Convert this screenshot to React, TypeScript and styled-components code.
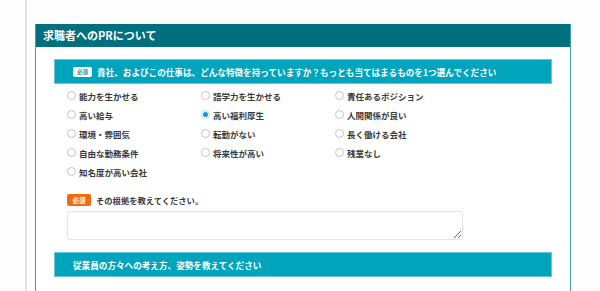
import styled, { createGlobalStyle } from "styled-components";

const GlobalStyle = createGlobalStyle`
  html, body {
    margin: 0;
    padding: 0;
    background: #fdfdfd;
    font-family: "Noto Sans CJK JP", "Noto Sans", sans-serif;
  }
`;

const Page = styled.div`
  margin-left: 25px;
  height: 291px;
  border-left: 2px solid #e4e4e4;
  padding: 24px 0 0 8px;
  box-sizing: border-box;
  overflow: hidden;
`;

const Panel = styled.section`
  width: 536px;
  box-sizing: border-box;
  border: 1px solid #3b9fad;
  border-top: none;
  background: #fff;
`;

const PanelHeader = styled.h2`
  margin: 0;
  height: 23px;
  background: #006f7e;
  color: #fff;
  font-size: 11px;
  font-weight: 700;
  line-height: 23px;
  padding-left: 7px;
`;

const PanelBody = styled.div`
  padding: 12px 18px 40px 18px;
`;

const SectionBar = styled.div`
  height: 25px;
  background: #00a4bc;
  border: 1px solid #6cc6d4;
  box-sizing: border-box;
  display: flex;
  align-items: center;
  gap: 5px;
  padding-left: 18px;
  color: #fff;
  font-size: 8.6px;
  font-weight: 700;
  white-space: nowrap;
`;

const Badge = styled.span<{ $tone: "light" | "orange" }>`
  display: inline-flex;
  align-items: center;
  justify-content: center;
  flex: none;
  border-radius: 2px;
  font-weight: 700;
  background: ${(p) => (p.$tone === "light" ? "#fff" : "#f26b11")};
  color: ${(p) => (p.$tone === "light" ? "#00a4bc" : "#fff")};
  width: ${(p) => (p.$tone === "light" ? "19px" : "24px")};
  height: ${(p) => (p.$tone === "light" ? "10px" : "12px")};
  font-size: ${(p) => (p.$tone === "light" ? "5.5px" : "6.5px")};
`;

const Content = styled.div`
  padding: 0 0 0 13px;
`;

const RadioGrid = styled.div`
  display: grid;
  grid-template-columns: repeat(3, 134px);
  grid-auto-rows: 19px;
  margin-top: 2px;
`;

const Option = styled.label`
  display: flex;
  align-items: center;
  gap: 3px;
  font-size: 8.5px;
  font-weight: 700;
  color: #3a3a3a;
  white-space: nowrap;
`;

const Radio = styled.span<{ $checked?: boolean }>`
  width: 9px;
  height: 9px;
  box-sizing: border-box;
  border-radius: 50%;
  border: 1px solid ${(p) => (p.$checked ? "#b8dcf2" : "#c4c4c4")};
  background: #fff;
  display: inline-flex;
  align-items: center;
  justify-content: center;
  flex: none;
  &::after {
    content: "";
    width: 5px;
    height: 5px;
    border-radius: 50%;
    background: ${(p) => (p.$checked ? "#1598e3" : "transparent")};
  }
`;

const QuestionRow = styled.div`
  display: flex;
  align-items: center;
  gap: 5px;
  margin-top: 13px;
  height: 12px;
  font-size: 8.3px;
  font-weight: 700;
  color: #3a3a3a;
`;

const TextBox = styled.textarea`
  display: block;
  margin-top: 5px;
  width: 396px;
  height: 29px;
  box-sizing: border-box;
  border: 1px solid #e3e3e3;
  border-radius: 3px;
  background: #fff;
  resize: both;
`;

const NextSection = styled.div`
  margin-top: 12px;
`;

const options = [
  "能力を生かせる",
  "語学力を生かせる",
  "責任あるポジション",
  "高い給与",
  "高い福利厚生",
  "人間関係が良い",
  "環境・雰囲気",
  "転勤がない",
  "長く働ける会社",
  "自由な勤務条件",
  "将来性が高い",
  "残業なし",
  "知名度が高い会社",
];

export default function App() {
  return (
    <>
      <GlobalStyle />
      <Page>
        <Panel>
          <PanelHeader>求職者へのPRについて</PanelHeader>
          <PanelBody>
            <SectionBar>
              <Badge $tone="light">必須</Badge>
              貴社、およびこの仕事は、どんな特徴を持っていますか？もっとも当てはまるものを1つ選んでください
            </SectionBar>
            <Content>
              <RadioGrid>
                {options.map((o) => (
                  <Option key={o}>
                    <Radio $checked={o === "高い福利厚生"} />
                    {o}
                  </Option>
                ))}
              </RadioGrid>
              <QuestionRow>
                <Badge $tone="orange">必須</Badge>
                その根拠を教えてください。
              </QuestionRow>
              <TextBox />
            </Content>
            <NextSection>
              <SectionBar>従業員の方々への考え方、姿勢を教えてください</SectionBar>
            </NextSection>
          </PanelBody>
        </Panel>
      </Page>
    </>
  );
}
